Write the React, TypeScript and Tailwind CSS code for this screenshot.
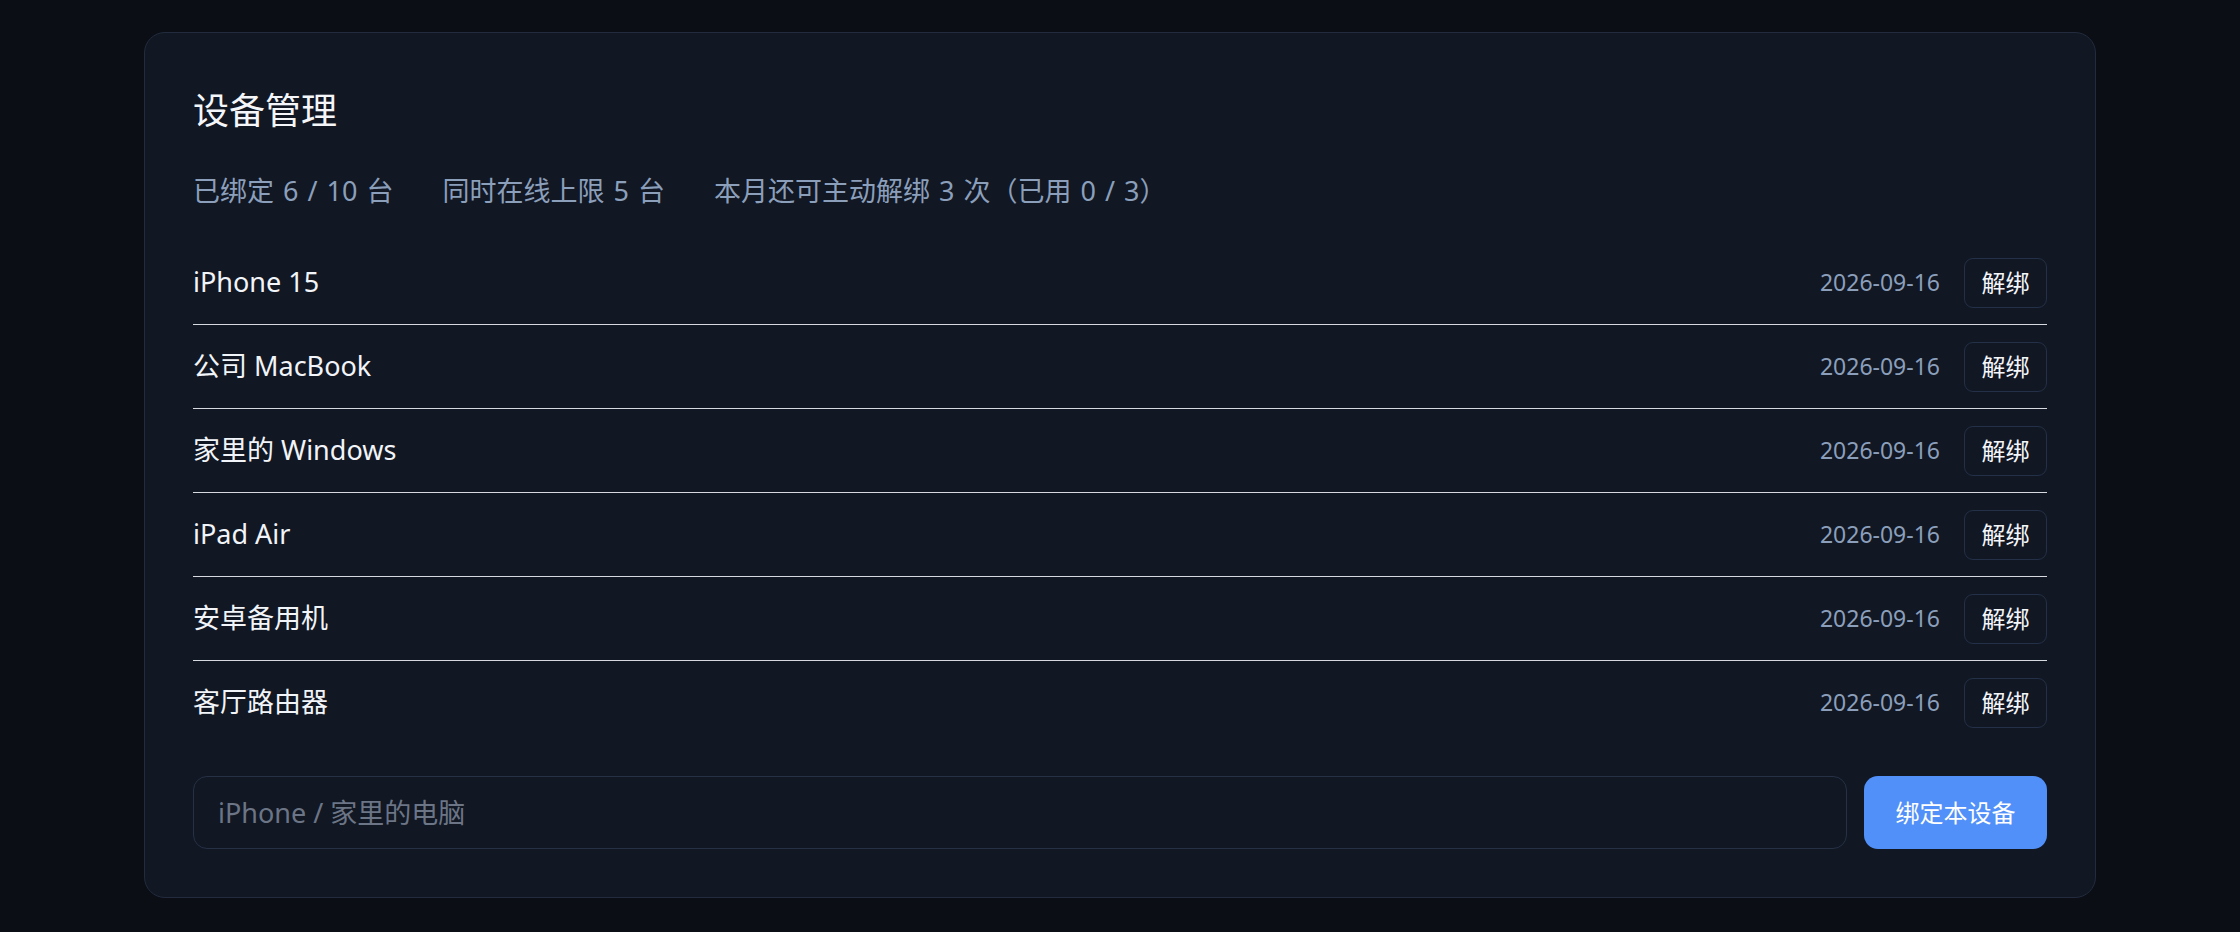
import React from "react";

const devices = [
  "iPhone 15",
  "公司 MacBook",
  "家里的 Windows",
  "iPad Air",
  "安卓备用机",
  "客厅路由器",
];

export default function App() {
  return (
    <div className="min-h-screen w-full bg-[#0b0e15] px-[144px] pt-[32px] font-['Noto_Sans','Noto_Sans_CJK_SC',sans-serif]">
      <div className="w-full rounded-[21px] border border-[#222c3e] bg-[#111723] p-[48px]">
        <h1 className="text-[36px] leading-[60px] font-normal text-[#f4f6fa]">设备管理</h1>
        <div className="mt-[30px] flex gap-x-[49px] text-[27px] leading-[40px] text-[#8b9fbb] [word-spacing:2px]">
          <span>已绑定 6 / 10 台</span>
          <span>同时在线上限 5 台</span>
          <span>本月还可主动解绑 3 次（已用 0 / 3）</span>
        </div>
        <div className="mt-[30px] flex flex-col">
          {devices.map((name, i) => (
            <div
              key={name}
              className={
                i < devices.length - 1
                  ? "flex h-[84px] items-center justify-between border-b border-[#d6dae0]"
                  : "flex h-[83px] items-center justify-between"
              }
            >
              <span className="text-[27px] text-[#f1f4f8]">{name}</span>
              <div className="flex items-center gap-[24px]">
                <span className="text-[23px] text-[#8b9fbb]">2026-09-16</span>
                <button className="flex h-[50px] w-[83px] items-center justify-center rounded-[9px] border border-[#243047] text-[24px] text-[#f4f6fa]">
                  解绑
                </button>
              </div>
            </div>
          ))}
        </div>
        <div className="mt-[32px] flex gap-[17px]">
          <input
            className="h-[73px] flex-1 rounded-[14px] border border-[#263146] bg-[#111723] px-[24px] text-[27px] text-[#f1f4f8] outline-none placeholder:text-[#6c7586]"
            placeholder="iPhone / 家里的电脑"
          />
          <button className="flex h-[73px] w-[183px] items-center justify-center rounded-[14px] bg-[#5190f8] text-[24px] font-normal text-white">
            绑定本设备
          </button>
        </div>
      </div>
    </div>
  );
}
